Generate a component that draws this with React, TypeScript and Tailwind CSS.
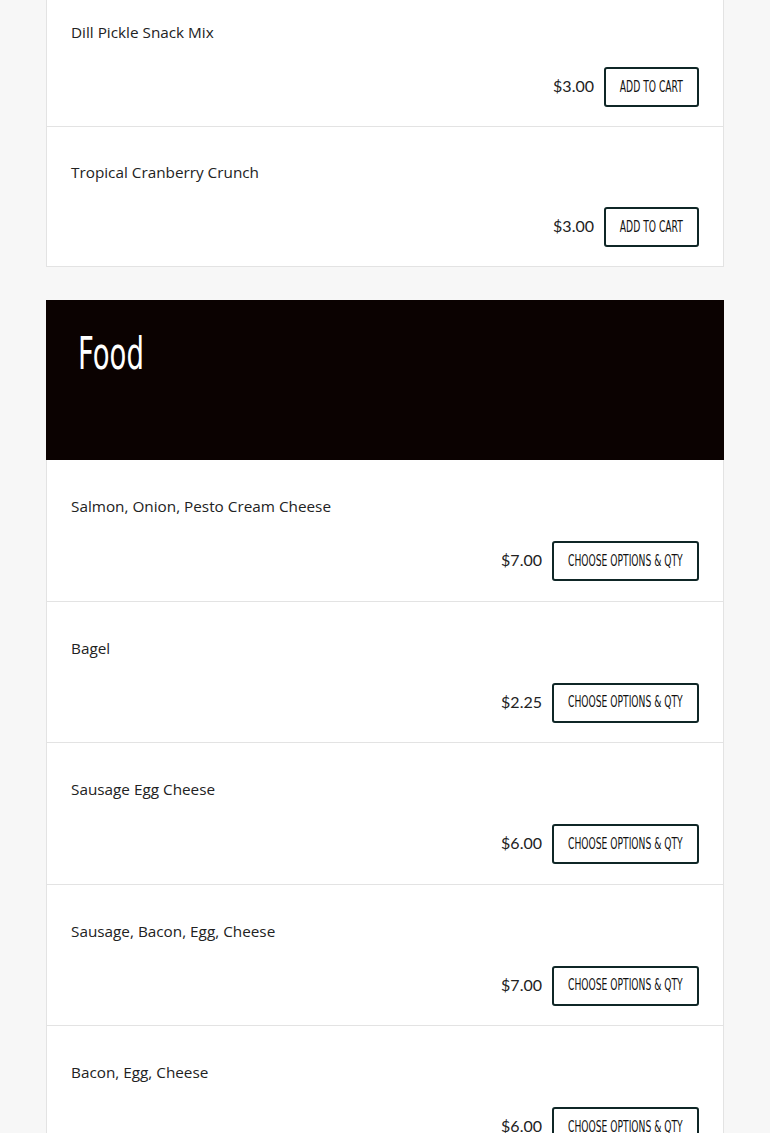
import React from "react"

type Item = { name: string; price: string; options?: boolean }

const snacks: Item[] = [
  { name: "Dill Pickle Snack Mix", price: "$3.00" },
  { name: "Tropical Cranberry Crunch", price: "$3.00" },
]

const food: Item[] = [
  { name: "Salmon, Onion, Pesto Cream Cheese", price: "$7.00", options: true },
  { name: "Bagel", price: "$2.25", options: true },
  { name: "Sausage Egg Cheese", price: "$6.00", options: true },
  { name: "Sausage, Bacon, Egg, Cheese", price: "$7.00", options: true },
  { name: "Bacon, Egg, Cheese", price: "$6.00", options: true },
]

function Row({ item, tight }: { item: Item; tight?: boolean }) {
  return (
    <div
      className={
        "border-b border-[#e3e3e3] bg-white px-6 last:border-b-0 " +
        (tight ? "pt-[33px] pb-[19px]" : "pt-[34px] pb-[19.5px]")
      }
    >
      <div className="font-['Open_Sans',sans-serif] text-[15.3px] leading-6 text-[#222]">{item.name}</div>
      <div className="mt-[23px] flex items-center justify-end gap-[10px]">
        <span className="-mt-[2px] font-['Lato',sans-serif] text-base text-[#222]">{item.price}</span>
        <button
          className={
            "flex h-10 items-center justify-center overflow-visible rounded-[3px] border-2 border-[#0f2626] bg-white " +
            (item.options ? "w-[147px]" : "w-[95px]")
          }
        >
          <span className="inline-block shrink-0 scale-x-[0.68] whitespace-nowrap font-['DejaVu_Sans',sans-serif] font-stretch-condensed text-[15px] uppercase text-[#111]">
            {item.options ? "Choose Options & Qty" : "Add to Cart"}
          </span>
        </button>
      </div>
    </div>
  )
}

export default function App() {
  return (
    <div className="min-h-[1133px] overflow-hidden bg-[#f7f7f7]">
      <div className="mx-auto -mt-[14px] w-[678px]">
        <div className="border border-[#e3e3e3]">
          {snacks.map((s) => (
            <Row key={s.name} item={s} tight />
          ))}
        </div>

        <div className="mt-[33px] h-40 bg-[#0b0201] px-8 pt-[26px]">
          <h2 className="inline-block origin-left scale-x-[0.68] font-['DejaVu_Sans',sans-serif] font-stretch-condensed text-[45px] leading-[56px] text-white">
            Food
          </h2>
        </div>

        <div className="border-x border-[#e3e3e3]">
          {food.map((f) => (
            <Row key={f.name} item={f} />
          ))}
        </div>
      </div>
    </div>
  )
}
